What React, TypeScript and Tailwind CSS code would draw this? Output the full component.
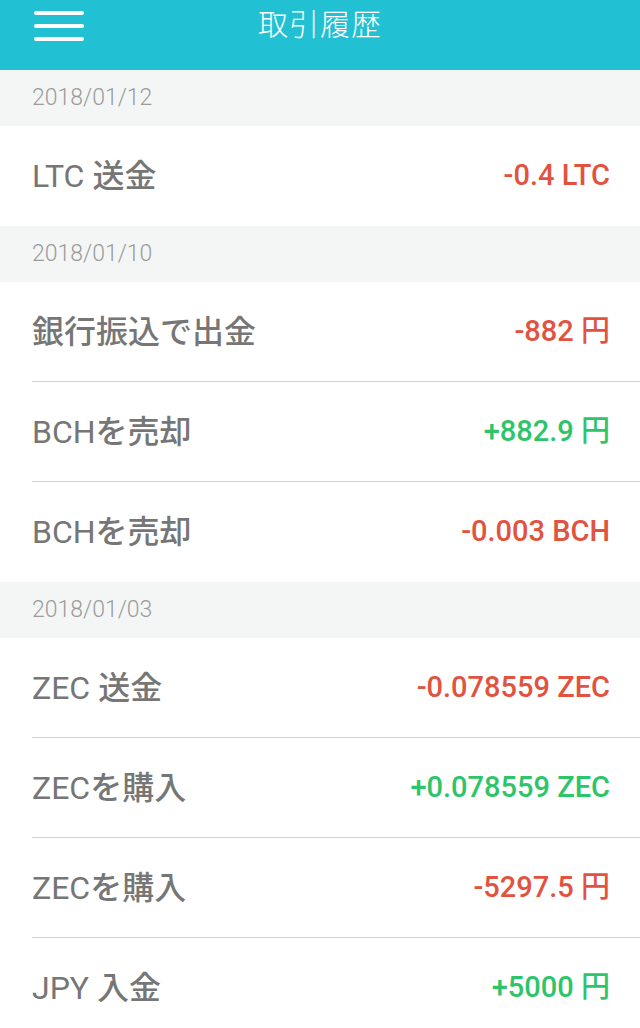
import React from 'react';

type Tx = { label: string; amount: string; positive: boolean };
type Group = { date: string; items: Tx[] };

const groups: Group[] = [
  { date: '2018/01/12', items: [{ label: 'LTC 送金', amount: '-0.4 LTC', positive: false }] },
  {
    date: '2018/01/10',
    items: [
      { label: '銀行振込で出金', amount: '-882 円', positive: false },
      { label: 'BCHを売却', amount: '+882.9 円', positive: true },
      { label: 'BCHを売却', amount: '-0.003 BCH', positive: false },
    ],
  },
  {
    date: '2018/01/03',
    items: [
      { label: 'ZEC 送金', amount: '-0.078559 ZEC', positive: false },
      { label: 'ZECを購入', amount: '+0.078559 ZEC', positive: true },
      { label: 'ZECを購入', amount: '-5297.5 円', positive: false },
      { label: 'JPY 入金', amount: '+5000 円', positive: true },
    ],
  },
];

const font = { fontFamily: 'Roboto, "Noto Sans CJK JP", sans-serif' };

// latin runs are lighter than the kana/kanji in the labels
const Label: React.FC<{ text: string }> = ({ text }) => {
  const parts = text.split(/([A-Za-z]+)/).filter(Boolean);
  return (
    <span className="text-[32px] text-[#767676] font-medium">
      {parts.map((p, i) =>
        /^[A-Za-z]+$/.test(p) ? (
          <span key={i} className="font-normal">{p}</span>
        ) : (
          <span key={i}>{p}</span>
        )
      )}
    </span>
  );
};

const App: React.FC = () => {
  return (
    <div className="w-[640px] h-[1028px] overflow-hidden bg-white" style={font}>
      {/* Header */}
      <header className="h-[70px] bg-[#22c0d3] flex items-center relative">
        <button className="absolute left-[34px] top-[11px] w-[50px] h-[30px] flex flex-col justify-between">
          <span className="block h-[4px] w-full rounded-full bg-white" />
          <span className="block h-[4px] w-full rounded-full bg-white" />
          <span className="block h-[4px] w-full rounded-full bg-white" />
        </button>
        <h1 className="w-full text-center text-white text-[30px] font-light -mt-[22px] tracking-[1px]">取引履歴</h1>
      </header>

      {groups.map((g) => (
        <section key={g.date}>
          <div className="h-[56px] bg-[#f4f6f6] flex items-center pl-[32px]">
            <span className="text-[23px] text-[#9b9b9b] font-light">{g.date}</span>
          </div>
          <ul className="pl-[32px]">
            {g.items.map((t, i) => (
              <li
                key={i}
                className={`h-[100px] flex items-center justify-between pr-[30px] ${i < g.items.length - 1 ? 'border-b border-[#d0d0d0]' : ''}`}
              >
                <Label text={t.label} />
                <span className={`text-[29px] font-medium ${t.positive ? 'text-[#2ec46a]' : 'text-[#e2533f]'}`}>{t.amount}</span>
              </li>
            ))}
          </ul>
        </section>
      ))}
    </div>
  );
};

export default App;
